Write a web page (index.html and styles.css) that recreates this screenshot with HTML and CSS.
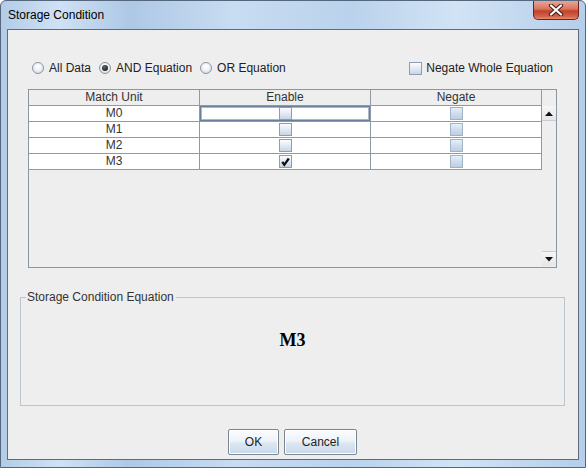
FILE: index.html
```html
<!DOCTYPE html>
<html>
<head>
<meta charset="utf-8">
<title>Storage Condition</title>
<link rel="stylesheet" href="styles.css">
</head>
<body>
<div class="window">
  <div class="titlebar">
    <span class="title">Storage Condition</span>
    <div class="close">
      <svg width="16" height="12" viewBox="0 0 16 12">
        <path d="M3 1.5 L13 10.5 M13 1.5 L3 10.5" stroke="#4a1c14" stroke-width="4.2" stroke-linecap="round" fill="none"/>
        <path d="M3 1.5 L13 10.5 M13 1.5 L3 10.5" stroke="#ffffff" stroke-width="2.2" stroke-linecap="round" fill="none"/>
      </svg>
    </div>
  </div>
  <div class="client">
    <div class="options">
      <div class="radios">
        <label class="opt"><span class="radio"></span>All Data</label>
        <label class="opt"><span class="radio on"></span>AND Equation</label>
        <label class="opt"><span class="radio"></span>OR Equation</label>
      </div>
      <label class="opt neg"><span class="cb"></span>Negate Whole Equation</label>
    </div>

    <div class="scrollpane">
      <div class="thead">
        <div class="th">Match Unit</div>
        <div class="th">Enable</div>
        <div class="th">Negate</div>
      </div>
      <div class="corner"></div>
      <div class="tbody">
        <div class="tr">
          <div class="td">M0</div>
          <div class="td focus"><span class="cb"></span></div>
          <div class="td"><span class="cb alt"></span></div>
        </div>
        <div class="tr">
          <div class="td">M1</div>
          <div class="td"><span class="cb"></span></div>
          <div class="td"><span class="cb alt"></span></div>
        </div>
        <div class="tr">
          <div class="td">M2</div>
          <div class="td"><span class="cb"></span></div>
          <div class="td"><span class="cb alt"></span></div>
        </div>
        <div class="tr">
          <div class="td">M3</div>
          <div class="td"><span class="cb"><svg width="11" height="11" viewBox="0 0 11 11"><path d="M2.3 5.8 L4.3 8.8 L8.8 2.5" stroke="#111" stroke-width="2.3" fill="none"/></svg></span></div>
          <div class="td"><span class="cb alt"></span></div>
        </div>
      </div>
      <div class="vscroll">
        <div class="sbtn"><svg width="8" height="5" viewBox="0 0 8 5"><path d="M0 5 L4 0.5 L8 5 Z" fill="#111"/></svg></div>
        <div class="track"></div>
        <div class="sbtn down"><svg width="8" height="5" viewBox="0 0 8 5"><path d="M0 0 L4 4.5 L8 0 Z" fill="#111"/></svg></div>
      </div>
    </div>

    <fieldset class="group">
      <legend>Storage Condition Equation</legend>
      <div class="equation">M3</div>
    </fieldset>

    <div class="buttons">
      <button class="btn ok">OK</button>
      <button class="btn cancel">Cancel</button>
    </div>
  </div>
</div>
</body>
</html>
```
FILE: styles.css
```css
html, body {
  margin: 0;
  padding: 0;
  background: #ffffff;
}
body {
  font-family: "Liberation Sans", Arial, sans-serif;
  font-size: 12px;
  color: #222;
}
.window {
  width: 586px;
  height: 468px;
  box-sizing: border-box;
  display: flex;
  flex-direction: column;
  border: 1px solid #55677c;
  border-radius: 6px 6px 0 0;
  background:
    linear-gradient(90deg, #b3cce7 0%, #cfe1f4 10%, #aec8e5 22%, #c8dcf2 40%, #bad2ec 60%, #d2e3f5 78%, #b5cee9 100%);
}
.titlebar {
  height: 28px;
  display: flex;
  align-items: flex-start;
  flex: none;
}
.title {
  padding: 7px 0 0 7px;
  font-size: 12px;
  color: #000;
  line-height: 15px;
}
.close {
  margin-left: auto;
  margin-right: 6px;
  width: 46px;
  height: 19px;
  box-sizing: border-box;
  border: 1px solid #6e2418;
  border-top: none;
  border-radius: 0 0 5px 5px;
  background: linear-gradient(#e9a597 0%, #d8735e 45%, #c4412b 55%, #d3614a 85%, #e88c72 100%);
  display: flex;
  align-items: center;
  justify-content: center;
}
.client {
  flex: 1;
  margin: 0 6px 7px 6px;
  border: 1px solid #5f6c7c;
  background: #eeeeee;
  display: flex;
  flex-direction: column;
  padding-top: 30px;
}
.options {
  height: 16px;
  display: flex;
  align-items: center;
  justify-content: space-between;
  padding: 0 25px 0 24px;
}
.radios {
  display: flex;
  gap: 8px;
}
.opt {
  display: flex;
  align-items: center;
  gap: 5px;
  color: #222;
  white-space: nowrap;
}
.neg { gap: 4px; }
.radio {
  width: 12px;
  height: 12px;
  box-sizing: border-box;
  border-radius: 50%;
  border: 1px solid #8995a2;
  background: radial-gradient(circle at 50% 35%, #ffffff 0%, #eef2f6 45%, #ccd5de 100%);
  display: flex;
  align-items: center;
  justify-content: center;
}
.radio.on::after {
  content: "";
  width: 6px;
  height: 6px;
  border-radius: 50%;
  background: radial-gradient(circle at 40% 35%, #666 0%, #222 70%);
}
.cb {
  width: 13px;
  height: 13px;
  box-sizing: border-box;
  border: 1px solid #8e9db0;
  background: linear-gradient(#fbfcfe 0%, #e3eaf3 50%, #c6d5e7 100%);
  display: flex;
  align-items: center;
  justify-content: center;
  flex: none;
}
.cb.alt {
  border-color: #a2b2c6;
  background: linear-gradient(#e9f0f8 0%, #cfdced 50%, #bccfe6 100%);
}
.scrollpane {
  margin: 13px 21px 0 20px;
  height: 179px;
  box-sizing: border-box;
  border: 1px solid #8a96a3;
  display: grid;
  grid-template-columns: 513px 14px;
  grid-template-rows: 16px 1fr;
  flex: none;
}
.thead {
  display: grid;
  grid-template-columns: 171px 171px 171px;
  background: #eeeeee;
}
.th {
  border-right: 1px solid #8e9aa6;
  border-bottom: 1px solid #8e9aa6;
  text-align: center;
  line-height: 15px;
  color: #333;
}
.corner {
  background: #eeeeee;
}
.tbody {
  background: #eeeeee;
}
.tr {
  display: grid;
  grid-template-columns: 171px 171px 171px;
  height: 16px;
}
.td {
  background: #ffffff;
  border-right: 1px solid #8e9aa6;
  border-bottom: 1px solid #8e9aa6;
  display: flex;
  align-items: center;
  justify-content: center;
  color: #333;
  line-height: 15px;
}
.td.focus {
  box-shadow: inset 0 0 0 1px #6a7f9c, inset 0 0 0 2px #aab8ca;
}
.vscroll {
  display: flex;
  flex-direction: column;
  background: #eeeeee;
}
.sbtn {
  height: 15px;
  flex: none;
  display: flex;
  align-items: center;
  justify-content: center;
  background: linear-gradient(#f6f6f6, #e6e6e6);
  border-bottom: 1px solid #c8ccd2;
  box-sizing: border-box;
}
.sbtn.down {
  border-bottom: none;
  border-top: 1px solid #c8ccd2;
  margin-bottom: 1px;
}
.track {
  flex: 1;
  background: #eeeeee;
}
.group {
  margin: 22px 13px 0 12px;
  padding: 0;
  min-width: 0;
  height: 116px;
  box-sizing: border-box;
  border: 1px solid #b9c5d1;
}
.group legend {
  margin-left: 5px;
  padding: 0 2px 0 1px;
  line-height: 14px;
  color: #333;
}
.equation {
  text-align: center;
  font-family: "Liberation Serif", "Times New Roman", serif;
  font-weight: bold;
  font-size: 18px;
  color: #000;
  line-height: 20px;
  padding-top: 26px;
}
.buttons {
  margin-top: 23px;
  display: flex;
  justify-content: center;
  gap: 5px;
  padding-right: 1px;
}
.btn {
  height: 26px;
  box-sizing: border-box;
  border: 1px solid #7b8592;
  border-radius: 2px;
  background: linear-gradient(#fbfcfe 0%, #eef3f9 45%, #dbe6f2 55%, #c9d9ea 100%);
  font-family: "Liberation Sans", Arial, sans-serif;
  font-size: 12px;
  color: #222;
  padding: 0;
  box-shadow: inset 0 0 0 1px #ffffff;
}
.ok { width: 51px; }
.cancel { width: 73px; }
```
